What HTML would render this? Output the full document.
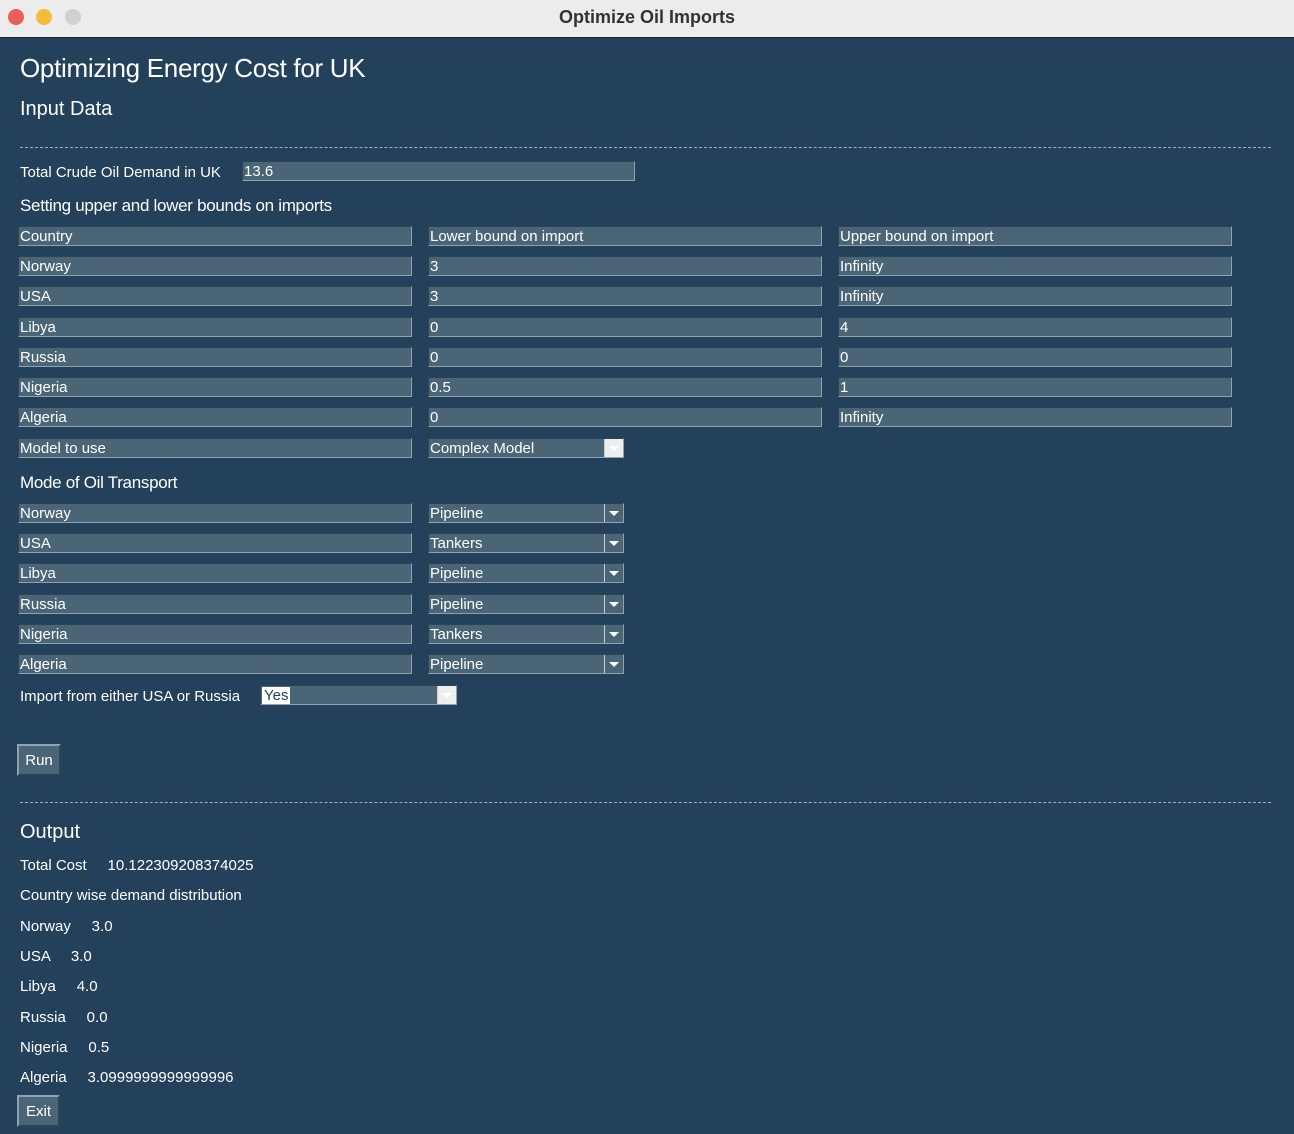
<html><head><style>
body{margin:0;width:1294px;height:1134px;overflow:hidden;font-family:"Liberation Sans",sans-serif;background:#23415a;position:relative;color:#fff}
.tb{position:absolute;left:0;top:0;width:1294px;height:37px;background:#ececec;border-bottom:1px solid #222;text-align:center;font-size:18px;font-weight:bold;color:#333;line-height:34px}
.d{position:absolute;top:9px;width:16px;height:16px;border-radius:50%}
.t{position:absolute;font-size:15px;white-space:nowrap}
.f{position:absolute;height:18px;background:#4a6576;border-top:1px solid #2c4556;border-left:1px solid #2c4556;border-right:1px solid #8fa3ae;border-bottom:1px solid #8fa3ae;font-size:15px;line-height:20px;padding-left:1px;box-sizing:content-box;white-space:nowrap}
.ar{position:absolute;right:0;top:0;width:18px;height:18px;background:#4a6576;border-left:1px solid #ccc}
.ar:after{content:"";position:absolute;left:4px;top:7px;border-left:5px solid transparent;border-right:5px solid transparent;border-top:5px solid #fff}
.hr{position:absolute;left:20px;width:1251px;height:0;border-top:1px dashed #a0b0bb}
.btn{position:absolute;background:#4a6576;border:2px solid #8fa3ae;border-right-color:#2c4556;border-bottom-color:#2c4556;font-size:15px;text-align:center}
</style></head><body>
<div class="tb">Optimize Oil Imports</div>
<div class="d" style="left:8px;background:#ec5f57"></div><div class="d" style="left:36px;background:#f3bd3b"></div><div class="d" style="left:65px;background:#d0d0d0"></div>
<div class="t" style="left:20px;top:53px;font-size:26px;letter-spacing:-0.3px">Optimizing Energy Cost for UK</div>
<div class="t" style="left:20px;top:98px;font-size:20px">Input Data</div>
<div class="hr" style="top:147px"></div>
<div class="t" style="left:20px;top:164px">Total Crude Oil Demand in UK</div>
<div class="f" style="left:242px;top:161px;width:390px">13.6</div>
<div class="t" style="left:20px;top:196px;font-size:17px;letter-spacing:-0.3px">Setting upper and lower bounds on imports</div>

<div class="f" style="left:18px;top:226px;width:391px">Country</div><div class="f" style="left:428px;top:226px;width:391px">Lower bound on import</div><div class="f" style="left:838px;top:226px;width:391px">Upper bound on import</div>
<div class="f" style="left:18px;top:256px;width:391px">Norway</div><div class="f" style="left:428px;top:256px;width:391px">3</div><div class="f" style="left:838px;top:256px;width:391px">Infinity</div>
<div class="f" style="left:18px;top:286px;width:391px">USA</div><div class="f" style="left:428px;top:286px;width:391px">3</div><div class="f" style="left:838px;top:286px;width:391px">Infinity</div>
<div class="f" style="left:18px;top:317px;width:391px">Libya</div><div class="f" style="left:428px;top:317px;width:391px">0</div><div class="f" style="left:838px;top:317px;width:391px">4</div>
<div class="f" style="left:18px;top:347px;width:391px">Russia</div><div class="f" style="left:428px;top:347px;width:391px">0</div><div class="f" style="left:838px;top:347px;width:391px">0</div>
<div class="f" style="left:18px;top:377px;width:391px">Nigeria</div><div class="f" style="left:428px;top:377px;width:391px">0.5</div><div class="f" style="left:838px;top:377px;width:391px">1</div>
<div class="f" style="left:18px;top:407px;width:391px">Algeria</div><div class="f" style="left:428px;top:407px;width:391px">0</div><div class="f" style="left:838px;top:407px;width:391px">Infinity</div>
<div class="f" style="left:18px;top:438px;width:391px">Model to use</div><div class="f" style="left:428px;top:438px;width:193px">Complex Model<div class="ar" style="background:#eee"></div></div>

<div class="t" style="left:20px;top:473px;font-size:17px;letter-spacing:-0.3px">Mode of Oil Transport</div>
<div class="f" style="left:18px;top:503px;width:391px">Norway</div><div class="f" style="left:428px;top:503px;width:193px">Pipeline<div class="ar"></div></div>
<div class="f" style="left:18px;top:533px;width:391px">USA</div><div class="f" style="left:428px;top:533px;width:193px">Tankers<div class="ar"></div></div>
<div class="f" style="left:18px;top:563px;width:391px">Libya</div><div class="f" style="left:428px;top:563px;width:193px">Pipeline<div class="ar"></div></div>
<div class="f" style="left:18px;top:594px;width:391px">Russia</div><div class="f" style="left:428px;top:594px;width:193px">Pipeline<div class="ar"></div></div>
<div class="f" style="left:18px;top:624px;width:391px">Nigeria</div><div class="f" style="left:428px;top:624px;width:193px">Tankers<div class="ar"></div></div>
<div class="f" style="left:18px;top:654px;width:391px">Algeria</div><div class="f" style="left:428px;top:654px;width:193px">Pipeline<div class="ar"></div></div>
<div class="t" style="left:20px;top:688px">Import from either USA or Russia</div>
<div class="f" style="left:260px;top:685px;width:194px"><span style="background:#fff;color:#23415a;padding:0 2px">Yes</span><div class="ar" style="background:#eee"></div></div>
<div class="btn" style="left:17px;top:744px;width:40px;height:28px;line-height:30px">Run</div>
<div class="hr" style="top:802px"></div>
<div class="t" style="left:20px;top:821px;font-size:20px">Output</div>
<div class="t" style="left:20px;top:857px">Total Cost &nbsp;&nbsp;&nbsp; 10.122309208374025</div>
<div class="t" style="left:20px;top:887px">Country wise demand distribution</div>
<div class="t" style="left:20px;top:918px">Norway &nbsp;&nbsp;&nbsp; 3.0</div>
<div class="t" style="left:20px;top:948px">USA &nbsp;&nbsp;&nbsp; 3.0</div>
<div class="t" style="left:20px;top:978px">Libya &nbsp;&nbsp;&nbsp; 4.0</div>
<div class="t" style="left:20px;top:1009px">Russia &nbsp;&nbsp;&nbsp; 0.0</div>
<div class="t" style="left:20px;top:1039px">Nigeria &nbsp;&nbsp;&nbsp; 0.5</div>
<div class="t" style="left:20px;top:1069px">Algeria &nbsp;&nbsp;&nbsp; 3.0999999999999996</div>
<div class="btn" style="left:17px;top:1095px;width:39px;height:28px;line-height:30px">Exit</div>
</body></html>
